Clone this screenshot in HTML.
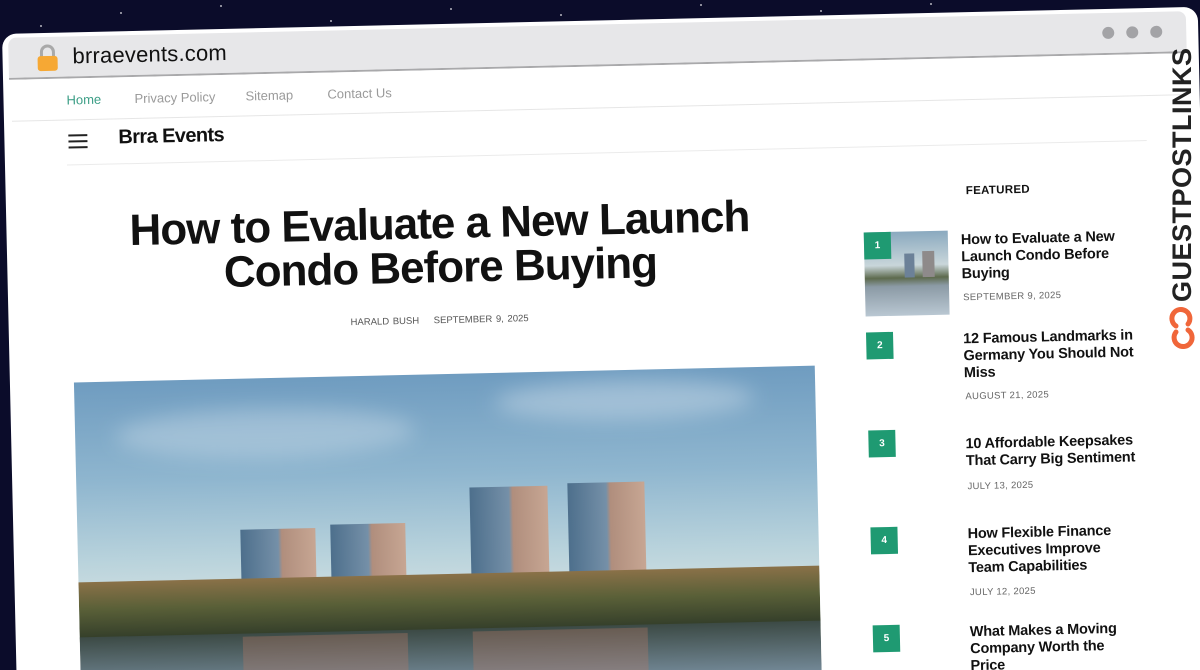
<!DOCTYPE html>
<html style="width:1200px;height:670px;overflow:hidden"><head><meta charset="utf-8"><style>
*{margin:0;padding:0;box-sizing:border-box}
body{width:1200px;height:670px;overflow:hidden;background:#0b0c2a;font-family:"Liberation Sans",sans-serif;position:relative}
.star{position:absolute;width:2px;height:2px;background:#fff;border-radius:50%;opacity:.7}
#frame{position:absolute;left:2px;top:34px;width:1196px;height:720px;background:#fff;border-radius:14px 14px 0 0;transform:rotate(-1.3deg);transform-origin:0 0;overflow:hidden}
.a{position:absolute;white-space:nowrap}
#bar{position:absolute;left:6px;top:4px;width:1178px;height:42px;background:#e7e7e9;border-bottom:2px solid #a9a9ab;border-radius:8px 8px 0 0}
.dot{position:absolute;width:12px;height:12px;border-radius:50%;background:#a3a3a6;top:14px}
.nav{font-size:13px;color:#9a9a9a;top:60px}
.badge{position:absolute;width:27px;height:27px;background:#1f9a72;color:#fff;font-size:10px;font-weight:bold;text-align:center;line-height:27px}
.st{position:absolute;left:954px;font-size:14.5px;line-height:17px;color:#111;font-weight:bold;letter-spacing:-.2px;white-space:nowrap}
.sd{position:absolute;left:955px;font-size:9.5px;color:#666;letter-spacing:.3px}
.bld{position:absolute;background:linear-gradient(90deg,#4d6f8c,#7590a8 50%,#b08e7d 55%,#c7a693)}
</style></head><body>
<div class="star" style="left:120px;top:12px"></div>
<div class="star" style="left:220px;top:5px"></div>
<div class="star" style="left:330px;top:20px"></div>
<div class="star" style="left:450px;top:8px"></div>
<div class="star" style="left:560px;top:14px"></div>
<div class="star" style="left:700px;top:4px"></div>
<div class="star" style="left:820px;top:10px"></div>
<div class="star" style="left:930px;top:3px"></div>
<div class="star" style="left:40px;top:25px"></div>
<div id="frame">
 <div id="bar">
  <div class="dot" style="left:1094px"></div><div class="dot" style="left:1118px"></div><div class="dot" style="left:1142px"></div>
 </div>
 <svg class="a" style="left:34px;top:11px" width="22" height="28" viewBox="0 0 22 28"><path d="M5 13V8a6 6 0 0 1 12 0v5" fill="none" stroke="#a9a9a9" stroke-width="3"/><rect x="1" y="12" width="20" height="15" rx="3" fill="#f6a834"/></svg>
 <div class="a" style="left:70px;top:11px;font-size:22px;color:#111;letter-spacing:.2px">brraevents.com</div>
 <div class="a nav" style="left:63px;color:#3c9e86">Home</div>
 <div class="a nav" style="left:131px">Privacy Policy</div>
 <div class="a nav" style="left:242px">Sitemap</div>
 <div class="a nav" style="left:324px">Contact Us</div>
 <div class="a" style="left:8px;top:87px;width:1175px;height:1px;background:#e6e6e6"></div>
 <div class="a" style="left:64px;top:102px;width:19px;height:2px;background:#222;box-shadow:0 6px 0 #222,0 12px 0 #222"></div>
 <div class="a" style="left:114px;top:95px;font-size:20px;font-weight:bold;color:#111;letter-spacing:-.6px">Brra Events</div>
 <div class="a" style="left:62px;top:132px;width:1080px;height:1px;background:#ebebeb"></div>
 <div class="a" style="left:83px;top:178px;width:700px;text-align:center;font-size:44px;line-height:44px;font-weight:bold;color:#111;letter-spacing:-1px;white-space:normal">How to Evaluate a New Launch<br>Condo Before Buying</div>
 <div class="a" style="left:331px;top:291px;width:200px;text-align:center;font-size:9.5px;color:#555;word-spacing:1px">HARALD BUSH &nbsp;&nbsp; SEPTEMBER 9, 2025</div>
 <div class="a" style="left:64px;top:350px;width:741px;height:400px;overflow:hidden;background:linear-gradient(180deg,#6f9cc0 0%,#8fb6cf 25%,#b9d3dc 45%,#d9e3e2 60%,#e4ddd2 70%)">
  <div class="a" style="left:40px;top:30px;width:300px;height:50px;background:rgba(255,255,255,.25);border-radius:50%;filter:blur(10px)"></div>
  <div class="a" style="left:420px;top:10px;width:260px;height:40px;background:rgba(255,255,255,.3);border-radius:50%;filter:blur(10px)"></div>
  <div class="bld" style="left:163px;top:151px;width:75px;height:70px"></div>
  <div class="bld" style="left:253px;top:148px;width:75px;height:73px"></div>
  <div class="bld" style="left:393px;top:114px;width:78px;height:107px"></div>
  <div class="bld" style="left:491px;top:112px;width:77px;height:109px"></div>
  <div class="a" style="left:0;top:200px;width:741px;height:60px;background:linear-gradient(180deg,#8a7148,#5a6038 45%,#2f3a28)"></div>
  <div class="a" style="left:0;top:255px;width:741px;height:150px;background:linear-gradient(180deg,#3c4a45,#7d94a6 40%,#a9bccb)"></div>
  <div class="a" style="left:163px;top:258px;width:165px;height:50px;background:rgba(180,120,100,.35)"></div>
  <div class="a" style="left:393px;top:258px;width:175px;height:60px;background:rgba(180,120,100,.35)"></div>
 </div>
 <div class="a" style="left:960px;top:173px;font-size:11.5px;font-weight:bold;color:#111;letter-spacing:.3px">FEATURED</div>
 <div class="a" style="left:857px;top:218px;width:84px;height:84px;overflow:hidden;background:linear-gradient(180deg,#8aa9bf,#c9d6da 40%,#5d6a4d 55%,#8b9aa5 65%,#b9c7d2)">
  <div class="a" style="left:40px;top:22px;width:10px;height:24px;background:#6c8198"></div>
  <div class="a" style="left:58px;top:20px;width:12px;height:26px;background:#8e8a8a"></div>
 </div>
 <div class="badge" style="left:857px;top:218px">1</div>
 <div class="st" style="top:220px">How to Evaluate a New<br>Launch Condo Before<br>Buying</div>
 <div class="sd" style="top:280px">SEPTEMBER 9, 2025</div>
 <div class="badge" style="left:857px;top:318px">2</div>
 <div class="st" style="top:319px">12 Famous Landmarks in<br>Germany You Should Not<br>Miss</div>
 <div class="sd" style="top:379px">AUGUST 21, 2025</div>
 <div class="badge" style="left:857px;top:416px">3</div>
 <div class="st" style="top:424px">10 Affordable Keepsakes<br>That Carry Big Sentiment</div>
 <div class="sd" style="top:469px">JULY 13, 2025</div>
 <div class="badge" style="left:857px;top:513px">4</div>
 <div class="st" style="top:514px">How Flexible Finance<br>Executives Improve<br>Team Capabilities</div>
 <div class="sd" style="top:575px">JULY 12, 2025</div>
 <div class="badge" style="left:857px;top:611px">5</div>
 <div class="st" style="top:612px">What Makes a Moving<br>Company Worth the<br>Price</div>
</div>
<div class="a" style="left:1057px;top:162px;width:250px;height:30px;transform:rotate(-90deg);font-size:27px;font-weight:bold;color:#222;letter-spacing:.5px;line-height:30px;text-align:center">GUESTPOSTLINKS</div>
<svg class="a" style="left:1168px;top:304px" width="28" height="48" viewBox="0 0 28 48"><g fill="none" stroke="#f0663a" stroke-width="5" stroke-linecap="round"><path d="M8 22a9 9 0 1 1 12-2"/><path d="M20 26a9 9 0 1 1-12 2"/></g></svg>
</body></html>
